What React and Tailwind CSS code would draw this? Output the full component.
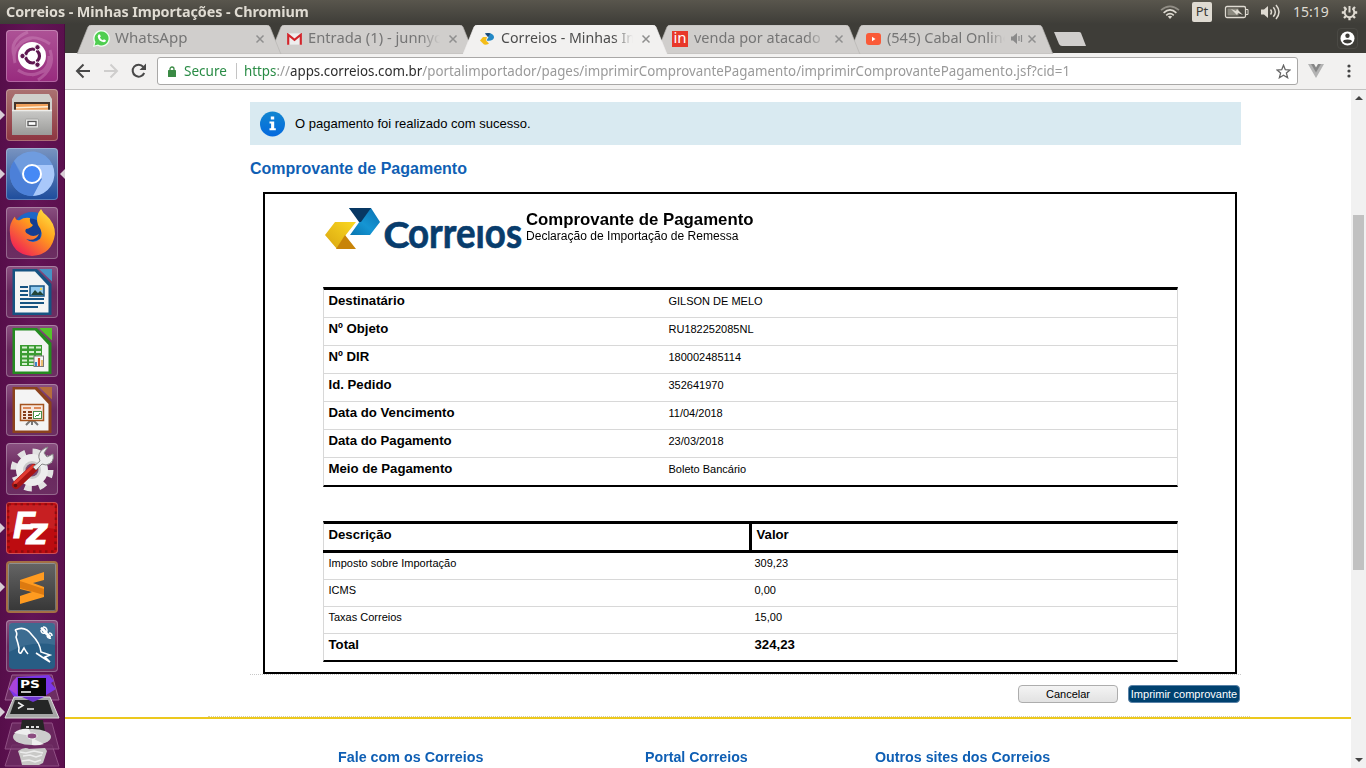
import React from "react";

const UI = "font-['Noto_Sans','Open_Sans',sans-serif]";

/* ---------- system bar ---------- */

function SystemBar() {
  return (
    <header className={`${UI} flex h-6 shrink-0 items-center justify-between bg-linear-to-b from-[#59564d] to-[#3e3d38] pl-1.5 pr-2`}>
      <h1 className="whitespace-nowrap text-[14px] font-bold leading-6 tracking-[-0.1px] text-[#dfdbd2]">
        <Fit width={303}>Correios - Minhas Importações - Chromium</Fit>
      </h1>
      <div className="flex items-center text-[#dfdbd2]">
        <svg width="20" height="16" viewBox="0 0 20 16" fill="none" stroke="currentColor" strokeWidth="1.6">
          <path d="M1 6.2Q10-1.5 19 6.2" opacity=".45" />
          <path d="M3.6 8.8Q10 3 16.4 8.8" />
          <path d="M6.2 11.4Q10 8 13.8 11.4" />
          <path d="M7.8 12.6Q10 11 12.2 12.6L10 15Z" fill="currentColor" stroke="none" />
        </svg>
        <span className="ml-3 flex h-5 w-5 items-center justify-center rounded-xs bg-[#dfdbd2] text-[13px] text-[#3c3b37]">Pt</span>
        <svg className="ml-3" width="25" height="14" viewBox="0 0 25 14" fill="none" stroke="currentColor">
          <rect x="1.5" y="1.5" width="20" height="11" rx="1.5" strokeWidth="1.3" />
          <path d="M22 4.5h2v5h-2" />
          <rect x="3.5" y="3.5" width="11" height="7" fill="#8b897f" stroke="none" />
          <path d="M7 4l5 2 1-2 6 6-5-2-1 2z" fill="currentColor" stroke="none" />
        </svg>
        <svg className="ml-[11px]" width="21" height="18" viewBox="0 0 21 18" fill="none" stroke="currentColor" strokeWidth="1.5">
          <path d="M1 6.5h3L8 3v12l-4-3.500H1z" fill="currentColor" stroke="none" />
          <path d="M10.500 6.500q2 2.500 0 5M13.300 4.200q4 4.800 0 9.600M16 2q6 7 0 14" />
        </svg>
        <span className="ml-3 w-9 whitespace-nowrap text-[14px] leading-6"><Fit width={36}>15:19</Fit></span>
        <svg className="ml-3" width="17" height="17" viewBox="0 0 17 17" fill="none" stroke="currentColor">
          <path d="M5.500 4.500a4.900 4.900 0 1 0 6 0" strokeWidth="2" />
          <path d="M8.500 2v6.500" strokeWidth="2" />
          <path d="M.8 8.500h2.700M13.500 8.500h2.700M8.500 13.500v2.700M3 3l2 2M12 5l2-2M3 14l2-2M12 12l2 2" strokeWidth="2.300" />
        </svg>
      </div>
    </header>
  );
}

/* Text laid out to an exact advance width. */
function Fit({ width, children }) {
  const ref = React.useRef(null);
  const [scale, setScale] = React.useState(1);
  React.useLayoutEffect(() => {
    setScale(width / ref.current.offsetWidth);
  }, [width]);
  return (
    <span ref={ref} className="inline-block origin-left whitespace-pre" style={{ transform: `scaleX(${scale})` }}>
      {children}
    </span>
  );
}

/* ---------- launcher ---------- */

function Tile({ className, left, right, children }) {
  return (
    <div className="relative flex h-[52px] shrink-0 justify-center">
      {left && <svg className="absolute left-0 top-[21px]" width="5" height="10"><path d="M0 0l5 5-5 5z" fill="#d8cdd6" /></svg>}
      <div className={`h-[52px] w-[52px] overflow-hidden rounded-[4px] shadow-[inset_0_0_0_1px_rgba(255,255,255,0.28)] ${className}`}>
        <svg width="52" height="52" viewBox="0 0 52 52">{children}</svg>
      </div>
      {right && <svg className="absolute -right-px top-[21px]" width="5" height="10"><path d="M5 0L0 5l5 5z" fill="#d8cdd6" /></svg>}
    </div>
  );
}

function OfficePage({ edge, light }) {
  return (
    <>
      <path d="M6.500 3H31L45.500 18V49H6.500Z" fill={edge} />
      <path d="M9 5.500H29L42.500 20V46.500H9Z" fill="#f4f4f4" />
      <path d="M33 3H46V15.500Z" fill={light} />
    </>
  );
}

function Launcher() {
  const glass = "bg-linear-to-b from-[#8a5080] via-[#69285e] to-[#6c2e62]";
  return (
    <nav className="flex w-[65px] shrink-0 flex-col gap-[7px] border-r border-[#4a0c40] bg-linear-to-r from-[#560e4a] via-[#631456] to-[#5b104e] pt-1.5">
      <Tile className="bg-linear-to-b from-[#ad5296] to-[#982a7e]">
        <g fill="none" stroke="#d99bc9" opacity=".35">
          <path d="M8 26Q3 10 22 2M9 33Q4 14 26 8M44 20Q50 38 32 50M43 26Q44 42 26 45M14 13Q26 2 44 14M12 40Q24 49 40 40" strokeWidth="3" />
        </g>
        <circle cx="26" cy="26" r="14" fill="#fff" />
        <circle cx="26.500" cy="26" r="7" fill="none" stroke="#5e1650" strokeWidth="3.200" />
        <path d="M26.500 26L16 26M26.500 26l5-9M26.500 26l5 9" stroke="#fff" strokeWidth="1.500" />
        <circle cx="26.500" cy="26" r="4.800" fill="#fff" />
        <g fill="#5e1650" stroke="#fff" strokeWidth="1">
          <circle cx="16.500" cy="26" r="2.700" /><circle cx="31.500" cy="17.300" r="2.700" /><circle cx="31.500" cy="34.700" r="2.700" />
        </g>
      </Tile>
      <Tile left className="bg-linear-to-b from-[#aa7272] to-[#8d3541]">
        <path d="M9 5H43L46 10V46H6V10Z" fill="#cfcfcb" />
        <path d="M8 13H44V22H8Z" fill="#45352c" />
        <path d="M10 15H42V21H10Z" fill="#f0a05a" /><path d="M10 18l32-1v1.500l-32 1z" fill="#fff0d8" />
        <defs><linearGradient id="drawer" x1="0" y1="0" x2="0" y2="1"><stop stopColor="#cacac8" /><stop offset="1" stopColor="#9b9b99" /></linearGradient></defs>
        <path d="M6 21H46V46H6Z" fill="url(#drawer)" />
        <path d="M6 21.500H46" stroke="#ededeb" strokeWidth="1.500" />
        <rect x="19.500" y="30" width="13" height="9" rx="1" fill="#e6e6e4" stroke="#a2a2a0" strokeWidth="1" />
        <rect x="22" y="32.500" width="8" height="4" fill="#fff" stroke="#555" strokeWidth="1.300" />
      </Tile>
      <Tile left right className="bg-linear-to-b from-[#7994c0] to-[#1d4c9c]">
        <circle cx="26" cy="26" r="22" fill="#5b90dd" />
        <path d="M8 13A22 22 0 0 0 27 48L36 31H17Z" fill="#4c80d8" />
        <path d="M27 48A22 22 0 0 0 46.500 17H26L36 31Z" fill="#a9c8fa" />
        <path d="M8 13A22 22 0 0 1 46.500 17H26L17 28Z" fill="#6f9cdf" />
        <circle cx="26" cy="26" r="9" fill="#4689f5" stroke="#fff" strokeWidth="2" />
      </Tile>
      <Tile className={glass}>
        <defs>
          <linearGradient id="fox" x1="1" y1="0" x2="0.200" y2="1"><stop stopColor="#fff14a" /><stop offset=".45" stopColor="#ff9d1c" /><stop offset="1" stopColor="#f01958" /></linearGradient>
        </defs>
        <circle cx="26" cy="24" r="19" fill="#1d66c8" />
        <path d="M13 14Q26 8 36 16L34 32Q22 38 16 27Z" fill="#153d91" />
        <path d="M6 14Q9 9 9 10Q10 14 14 13Q18 10 24 11Q23 16 27 18Q25 21 20 22Q18 25 22 27Q27 31 33 27Q29 35 20 32Q27 38 34 32Q38 26 32 18Q29 9 35 2Q37 6 40 8Q49 16 49 27Q46 48 26 49Q5 47 4 27Q3 19 6 14Z" fill="url(#fox)" />
      </Tile>
      <Tile className={glass}>
        <OfficePage edge="#165382" light="#4793c4" />
        <path d="M14 21H22M14 25H22M14 29H22M14 33H38M14 37H38M14 41H32" stroke="#165382" strokeWidth="2" />
        <rect x="24" y="20" width="14" height="10" fill="#91c9ee" stroke="#165382" strokeWidth="1.500" />
        <path d="M25 29l4-5 3 3 2-2 4 4z" fill="#234537" /><circle cx="35" cy="23" r="1.200" fill="#f4d74f" />
      </Tile>
      <Tile className={glass}>
        <OfficePage edge="#258b20" light="#55c42c" />
        <rect x="14" y="20" width="22" height="21" fill="#3a9b31" />
        <path d="M16 22.500H21M23 22.500H28M30 22.500H35M16 27H21M23 27H28M30 27H35M16 31.500H21M23 31.500H28M30 31.500H35M16 35.500H21M23 35.500H28M16 39H21M23 39H28" stroke="#d5efd0" strokeWidth="2" />
        <rect x="28" y="31" width="9.500" height="10.500" fill="#f5f5f5" stroke="#777" />
        <path d="M30 41V37" stroke="#3a86c9" strokeWidth="2" /><path d="M33 41V33" stroke="#d64a25" strokeWidth="2.200" /><path d="M36 41V35" stroke="#e3a840" strokeWidth="1.500" />
      </Tile>
      <Tile className={glass}>
        <OfficePage edge="#8c421d" light="#b56e3d" />
        <path d="M20 41l4-4h4l4 4M26 37v4" stroke="#777" strokeWidth="2" fill="none" />
        <rect x="14.500" y="20.500" width="23" height="16" fill="#f7e6dc" stroke="#a4531e" strokeWidth="1.500" />
        <path d="M17 24H25M28 24H35" stroke="#dd8a5b" strokeWidth="2" />
        <path d="M17 28H20M22 28H26M17 31H20M22 31H26M17 34H20M22 34H26" stroke="#843b18" strokeWidth="2" />
        <rect x="27.500" y="27.500" width="8" height="7" fill="#fff" stroke="#4a8d4a" /><path d="M29 33l2-2 1 1 2-3" stroke="#269030" fill="none" />
      </Tile>
      <Tile className={glass}>
        <circle cx="26" cy="27" r="18" fill="none" stroke="#e2e2e2" strokeWidth="7" strokeDasharray="7.070 7.067" />
        <circle cx="26" cy="27" r="12.500" fill="#c9c9c9" stroke="#ededed" strokeWidth="7" />
        <circle cx="26" cy="27" r="6.500" fill="#7a4771" />
        <path d="M10 42L28 25" stroke="#a91514" strokeWidth="8" strokeLinecap="round" /><path d="M9 40L27 23" stroke="#e23b32" strokeWidth="3" strokeLinecap="round" />
        <circle cx="9.500" cy="42.500" r="1.800" fill="#581010" />
        <path d="M27 24L34 18Q30 10 39 5L42 4L38 10L41 14L47 11Q49 20 40 22L36 21L30 27Z" fill="#ececec" stroke="#888" />
      </Tile>
      <Tile left className="bg-[#bd0c10]">
        <rect x="2.500" y="2.500" width="47" height="47" fill="none" stroke="#8e0a0e" strokeWidth="2.500" strokeDasharray="2.500 3.500" />
        <path d="M3 3H49V27Q25 22 3 31Z" fill="#dd4d4d" opacity=".3" />
        <text x="7" y="36" fontFamily="Liberation Sans" fontWeight="bold" fontStyle="italic" fontSize="36" fill="#fff" stroke="#fff">F<tspan x="20" y="42" fontSize="37" textLength="22" lengthAdjust="spacingAndGlyphs">z</tspan></text>
      </Tile>
      <Tile left className="border-2 border-[#a47045] bg-linear-to-b from-[#656565] to-[#373737]">
        <path d="M12 17L36 9V17L25 20L36 24V34L12 41V33L24 29L12 26Z" fill="#ff9b20" />
        <path d="M12 18L36 26V32L12 25Z" fill="#dd7a10" />
      </Tile>
      <Tile className={glass}>
        <rect x="3" y="3" width="46" height="46" rx="4" fill="#285d84" />
        <path d="M3 3H49V25Q25 20 3 32Z" fill="#6289aa" opacity=".35" />
        <path d="M9 10Q19 5 26 15Q34 23 35 32L44 35L39 37L44 42L36 37L30 33M9 10Q12 13 10 17Q12 23 13 28Q12 34 15 33L18 28Q20 32 22 34" fill="none" stroke="#fff" strokeWidth="1.600" />
        <path d="M36 8.500l2.500 2.500M39 12l4.500 4.500" stroke="#fff" strokeWidth="3" strokeLinecap="round" /><path d="M35 10q0 4 4 3l2-2q0-4-4-4M41 16q1 3 4 2M46 16q0-3-3-3" fill="none" stroke="#fff" strokeWidth="1.500" />
      </Tile>
      <svg className="-mt-1.5 shrink-0" width="64" height="95" viewBox="0 0 64 95">
        <g stroke="#9c5f90" fill="#6d2d62">
          <path d="M12 2H52L59 27H5Z" />
          <path d="M12 72H52L59 93H5Z" opacity=".8" />
          <path d="M12 50H52L59 76H5Z" opacity=".8" />
        </g>
        <path d="M17 4L49 2L54 8L51 10L56 16L38 27L14 24L9 16L13 10Z" fill="#7b35e8" />
        <path d="M9 16L13 8L17 4V22Z" fill="#a844da" />
        <rect x="18" y="5" width="28" height="18" fill="#070707" />
        <text x="20" y="15" fontFamily="DejaVu Sans" fontWeight="bold" fontSize="11" fill="#fff" textLength="20" lengthAdjust="spacingAndGlyphs">PS</text>
        <path d="M21 19H31" stroke="#fff" strokeWidth="1.500" />
        <path d="M14 24H50L59 45H5Z" fill="#a6a6a6" stroke="#ddd" />
        <path d="M15 27H48L53 41H10Z" fill="#252626" />
        <path d="M22 24H44L33 29Z" fill="#6e35d0" />
        <path d="M18 29.500l5 3-5 3M27 36h7" fill="none" stroke="#eee" strokeWidth="1.500" />
        <path d="M22 47H43L45 59H20Z" fill="#252525" /><path d="M26 54H39" stroke="#ddd" strokeWidth="2" strokeDasharray="3 2" />
        <ellipse cx="32" cy="64" rx="19" ry="8" fill="#ccc" /><path d="M32 63L14 60Q20 55 29 56ZM32 65L44 71Q38 73 32 72Z" fill="#eee" />
        <ellipse cx="32" cy="63" rx="5" ry="3" fill="#8b4c80" stroke="#eee" />
        <path d="M18 78Q25 73 29 76L45 75L47 78L43 90L39 92H22L20 84Z" fill="#c9c9c7" />
        <path d="M20 79l6 1 8-2 9 2M23 83l7-1 6 2 6-2M22 88l7-1 6 2 6-2" stroke="#ececec" fill="none" strokeWidth="1.500" />
        <path d="M0 34l5 5-5 5z" fill="#d8cdd6" />
      </svg>
    </nav>
  );
}

/* ---------- browser chrome ---------- */

function Close() {
  return <svg className="shrink-0" width="10" height="10" viewBox="0 0 10 10"><path d="M1.500 1.500l7 7M8.500 1.500l-7 7" stroke="#8f8f8f" strokeWidth="1.500" /></svg>;
}

function Tab({ icon, title, width, active, audio, z }) {
  const fill = active ? "#f2f1f0" : "#d0cecc";
  return (
    <div className={`relative -mr-3 flex h-[29px] w-[205px] shrink-0 items-center pb-[3px] pl-4 pr-[17px] ${z}`}>
      <svg className="absolute inset-0" width="205" height="29" viewBox="0 0 205 29">
        <path d="M0 29L1 27L11 2Q12 0 14 0H190Q192 0 193 2L203 27L204 29Z" fill={fill} stroke={active ? "#f2f1f0" : "#b8b6b3"} strokeWidth=".7" />
      </svg>
      <span className="relative mt-px flex h-4 w-4 shrink-0 items-center justify-center">{icon}</span>
      <span className={`relative ml-1.5 min-w-0 flex-1 overflow-hidden whitespace-nowrap text-[14px] leading-[26px] ${audio ? "mr-1.5" : "mr-2"} mask-r-from-85% ${active ? "text-[#4c4c4c]" : "text-[#757575]"}`}>
        <Fit width={width}>{title}</Fit>
      </span>
      {audio && (
        <svg className="relative mr-1 shrink-0" width="12" height="11" viewBox="0 0 12 11">
          <path d="M0 3.500h2L6 0v11L2 7.500H0z" fill="#8a8a8a" /><path d="M8 3v5M10.500 2v7" stroke="#8a8a8a" strokeWidth="1.200" />
        </svg>
      )}
      <span className="relative mt-0.5 flex"><Close /></span>
    </div>
  );
}

const whatsapp = (
  <svg width="17" height="17" viewBox="0 0 17 17" className="shrink-0">
    <path d="M0 17L1.200 12.500A8.300 8.300 0 1 1 4.500 15.800Z" fill="#f3fff3" />
    <path d="M1.500 15.500L2.500 12A7 7 0 1 1 5 14.500Z" fill="#4fce50" />
    <path d="M5.500 4.500l1.500 0 .8 2-.9 1q1 2 3 2.800l1-1.100 2 1q0 2-2 2Q5.500 11.500 4.700 6.500Z" fill="#fff" />
  </svg>
);
const gmail = (
  <svg width="15" height="12" viewBox="0 0 16 12"><path d="M1 0H15V12H1Z" fill="#eee" /><path d="M1.300 12V1.500L8 7l6.700-5.500V12" fill="none" stroke="#d3252b" strokeWidth="2.300" /></svg>
);
function Swirl() {
  return (
    <svg width="15" height="12" viewBox="0 0 15 12">
      <path d="M5 .5Q9-.5 12 1Q15.500 3.500 13 6.500Q10 8.500 6.500 7.500L8.500 4Z" fill="#2389c6" /><path d="M5 .5Q8-.3 10.500.4L8 4Z" fill="#1c4775" />
      <path d="M3 4H7L6 7.500L9 10.500Q8 12 4 11.500L0 7.500Z" fill="#f4bd19" />
    </svg>
  );
}
const inSite = (
  <span className="flex h-4 w-4 items-center justify-center bg-[#e8382a] pb-0.5 text-[15px] leading-none text-white">in</span>
);
const youtube = (
  <svg width="15" height="12" viewBox="0 0 15 12"><rect width="15" height="12" rx="3" fill="#fa5a38" /><path d="M6 3.800L9.500 6L6 8.200Z" fill="#fff" /></svg>
);

function TabStrip() {
  return (
    <div className={`${UI} flex h-[29px] shrink-0 justify-between bg-[#3e3d38] pl-3`}>
      <div className="flex pt-px">
        <Tab icon={whatsapp} title="WhatsApp" width={72} z="z-5" />
        <Tab icon={gmail} title="Entrada (1) - junnyor" width={141} z="z-4" />
        <Tab icon={<Swirl />} title="Correios - Minhas Impo" width={156} active z="z-10" />
        <Tab icon={inSite} title="venda por atacado" width={127} z="z-3" />
        <Tab icon={youtube} title="(545) Cabal Online" width={124} audio z="z-2" />
        <svg className="ml-[11px] mt-1.5" width="33" height="17" viewBox="0 0 33 17"><path d="M1 1H26Q27.500 1 28 2L33 15H9Q7 15 6 13Z" fill="#d0cecc" /></svg>
      </div>
      <div className="mr-2 mt-1 flex h-[21px] w-[21px] items-center justify-center rounded-sm border border-[#4a4944]">
        <svg width="15" height="15" viewBox="0 0 15 15"><circle cx="7.500" cy="7.500" r="7" fill="#fff" /><circle cx="7.500" cy="4.800" r="2.200" fill="#3c3b37" /><path d="M3 10.500Q3 8.500 7.500 8.500T12 10.500Q10.500 12.500 7.500 12.500T3 10.500Z" fill="#3c3b37" /></svg>
      </div>
    </div>
  );
}

function Toolbar() {
  return (
    <div className={`${UI} flex h-[37px] shrink-0 items-center border-b border-[#c3c2c1] bg-[#f2f1f0] pl-2.5`}>
      <svg width="16" height="16" viewBox="0 0 16 16" fill="none" stroke="#484848" strokeWidth="2"><path d="M15 8H2.500M8.500 1.500L2 8l6.500 6.500" /></svg>
      <svg className="ml-3" width="16" height="16" viewBox="0 0 16 16" fill="none" stroke="#cfcecd" strokeWidth="2"><path d="M1 8H13.500M7.500 1.500L14 8l-6.500 6.500" /></svg>
      <svg className="ml-3" width="16" height="16" viewBox="0 0 16 16"><path d="M13.200 10A6 6 0 1 1 12.300 3.800" fill="none" stroke="#484848" strokeWidth="2" /><path d="M15 .5V7H8.500Z" fill="#484848" /></svg>
      <div className="ml-2.5 flex h-7 w-[1141px] items-center rounded-[3px] border border-[#a9a8a7] bg-white pl-2.5 pr-1.5 text-[14.5px]">
        <svg width="8" height="11" viewBox="0 0 8 11"><rect y="4" width="8" height="7" rx=".6" fill="#3a8a44" /><path d="M2 5V3a2 2 0 0 1 4 0v2" fill="none" stroke="#3a8a44" strokeWidth="1.300" /></svg>
        <span className="ml-2 w-[43px] whitespace-nowrap text-[#2a8c46]"><Fit width={43}>Secure</Fit></span>
        <span className="ml-[9px] h-4 w-px bg-[#c4c4c4]" />
        <span className="ml-[7px] flex-1 whitespace-nowrap text-[#9a9a9a]">
          <Fit width={826}><span className="text-[#2a8c46]">https</span>://<span className="text-[#2e2e2e]">apps.correios.com.br</span>/portalimportador/pages/imprimirComprovantePagamento/imprimirComprovantePagamento.jsf?cid=1</Fit>
        </span>
        <svg width="15" height="15" viewBox="0 0 15 15"><path d="M7.500 1.200L9.300 5.700L14 6L10.400 9.100L11.600 13.700L7.500 11.200L3.400 13.700L4.600 9.100L1 6L5.700 5.700Z" fill="none" stroke="#666" strokeWidth="1.300" /></svg>
      </div>
      <svg className="ml-2.5" width="16" height="14" viewBox="0 0 16 14"><path d="M0 0H3.500L8 7.500L12.500 0H16L8 14Z" fill="#b3b3b3" /><path d="M3 0H6L8 3.500L10 0H13L8 8.500Z" fill="#868686" /></svg>
      <svg className="ml-[23px]" width="4" height="14" viewBox="0 0 4 14" fill="#444"><circle cx="2" cy="2" r="1.600" /><circle cx="2" cy="7" r="1.600" /><circle cx="2" cy="12" r="1.600" /></svg>
    </div>
  );
}

/* ---------- page ---------- */

function Logo() {
  return (
    <svg className="shrink-0" width="197" height="44" viewBox="0 0 197 44">
      <defs>
        <linearGradient id="lb" x1="1" y1="0" x2="0" y2="1"><stop stopColor="#0a70b0" /><stop offset=".55" stopColor="#1595d3" /><stop offset="1" stopColor="#0874af" /></linearGradient>
        <linearGradient id="ly" x1="0" y1="1" x2="1" y2="0"><stop stopColor="#d9a510" /><stop offset="1" stopColor="#fbd922" /></linearGradient>
        <clipPath id="wm"><path d="M58 8H84V44H58ZM84 17.500H197V44H84Z" /></clipPath>
      </defs>
      <path d="M24 0H46L55 14L45 27H25L35 13Z" fill="url(#lb)" />
      <path d="M24 0H46L36 14H34Z" fill="#083763" />
      <path d="M10 14H31L20 28L12 41L0 27Z" fill="url(#ly)" />
      <path d="M20 27L31 41H11Z" fill="#c88409" />
      <text x="58.500" y="40.300" clipPath="url(#wm)" fill="#083c6c" stroke="#083c6c" strokeWidth=".7" fontFamily="Lato, sans-serif" fontWeight="bold" fontSize="36.500">
        <tspan textLength="26" lengthAdjust="spacingAndGlyphs">C</tspan><tspan x="83" fontSize="42.500" textLength="114" lengthAdjust="spacingAndGlyphs">orreios</tspan>
      </text>
    </svg>
  );
}

const details = [
  ["Destinatário", "GILSON DE MELO"],
  ["Nº Objeto", "RU182252085NL"],
  ["Nº DIR", "180002485114"],
  ["Id. Pedido", "352641970"],
  ["Data do Vencimento", "11/04/2018"],
  ["Data do Pagamento", "23/03/2018"],
  ["Meio de Pagamento", "Boleto Bancário"],
];

const charges = [
  ["Imposto sobre Importação", "309,23"],
  ["ICMS", "0,00"],
  ["Taxas Correios", "15,00"],
];

function Receipt() {
  return (
    <section className="mx-[13px] mr-1 mt-[13px] h-[482px] border-2 border-black pl-[58px] pr-[57px] pt-3.5 text-black">
      <div className="flex h-[79px] pl-0.5">
        <Logo />
        <div className="ml-1 pt-0.5">
          <h3 className="text-[17px] font-bold leading-[19px]"><Fit width={228}>Comprovante de Pagamento</Fit></h3>
          <p className="text-[12px] leading-[14px]"><Fit width={212}>Declaração de Importação de Remessa</Fit></p>
        </div>
      </div>
      <dl className="h-[200px] border-x border-b-2 border-t-[3px] border-x-[#d8d8d8] border-y-black">
        {details.map(([k, v]) => (
          <div key={k} className="flex h-7 border-b border-[#d8d8d8] pl-[4.500px] pt-0.5 last:h-[27px] last:border-b-0">
            <dt className="w-[340px] text-[13.200px] font-bold leading-[17px]">{k}</dt>
            <dd className="text-[11px] leading-[18px]">{v}</dd>
          </div>
        ))}
      </dl>
      <div className="mt-[34px] h-[141px] border-x border-b-2 border-t-[3px] border-x-[#d8d8d8] border-y-black text-[11px]">
        <div className="-mx-px flex h-[29px] border-b-[3px] border-black text-[13.200px] font-bold leading-[17px]">
          <div className="w-[429px] border-r-[3px] border-black pl-[5.500px] pt-0.5">Descrição</div>
          <div className="pl-[4.500px] pt-0.5">Valor</div>
        </div>
        {charges.map(([k, v]) => (
          <div key={k} className="flex h-[27px] border-b border-[#d8d8d8] pl-[4.500px] pt-px leading-[18px]">
            <span className="w-[426px]">{k}</span>
            <span>{v}</span>
          </div>
        ))}
        <div className="flex pl-[4.500px] pt-0.5 text-[13.200px] font-bold leading-[18px]">
          <span className="w-[426px]">Total</span>
          <span>324,23</span>
        </div>
      </div>
    </section>
  );
}

function Page() {
  return (
    <main className="flex min-w-0 flex-1 flex-col overflow-hidden bg-white font-['Liberation_Sans',Arial,sans-serif]">
      <div className="ml-[185px] mt-3 w-[991px]">
        <div className="flex h-[43px] items-center bg-[#d9eaf1] pl-2.5 text-[13px] text-black">
          <svg width="26" height="26" viewBox="0 0 26 26">
            <defs><linearGradient id="info" x1="0" y1="0" x2="0" y2="1"><stop stopColor="#1286d0" /><stop offset="1" stopColor="#0469de" /></linearGradient></defs>
            <circle cx="12.500" cy="13" r="12.500" fill="url(#info)" />
            <path d="M10.800 5.500h3.400v3h-3.400zM9.500 10.500h4.700v6.800h1.600v1.900H9.500v-1.900h1.600v-4.900H9.500z" fill="#fff" />
          </svg>
          <p className="ml-[9px]">O pagamento foi realizado com sucesso.</p>
        </div>
        <h2 className="mt-[13px] text-[16px] font-bold leading-[21px] text-[#0f5fb4]">Comprovante de Pagamento</h2>
        <Receipt />
        <div className="border-t border-dotted border-[#c8c8c8]" />
        <div className="mt-2.5 flex justify-end gap-2.5 pr-px text-[11px]">
          <button className="h-[18px] w-[100px] rounded-[4px] border border-[#adadad] bg-linear-to-b from-[#f4f4f4] to-[#e2e2e2] leading-4 text-black">Cancelar</button>
          <button className="h-[18px] w-28 whitespace-nowrap rounded-[4px] border border-[#5b83a8] bg-[#00416f] leading-4 text-white">Imprimir comprovante</button>
        </div>
      </div>
      <div className="ml-[143px] mt-[13px] w-[1042px] border-t border-dotted border-[#d8cfa0]" />
      <footer className="h-[51px] shrink-0 border-t-2 border-[#ecc81e] pl-[273px] pt-[29px] text-[14.500px] font-bold leading-[18px] text-[#0f5fb4]">
        <div className="flex whitespace-nowrap">
          <span className="w-[307px]"><Fit width={145}>Fale com os Correios</Fit></span>
          <span className="w-[230px]"><Fit width={103}>Portal Correios</Fit></span>
          <span><Fit width={175}>Outros sites dos Correios</Fit></span>
        </div>
      </footer>
    </main>
  );
}

function Scrollbar() {
  return (
    <div className="flex w-[15px] shrink-0 flex-col items-center justify-between bg-[#f1f1f1] py-1.5">
      <svg width="8" height="4"><path d="M0 4L4 0l4 4z" fill="#444" /></svg>
      <div className="mb-[188px] mt-auto h-[355px] w-[11px] bg-[#c1c1c1]" />
      <svg width="8" height="4"><path d="M0 0h8L4 4z" fill="#444" /></svg>
    </div>
  );
}

export default function App() {
  return (
    <div className="flex h-[768px] w-[1366px] flex-col overflow-hidden bg-white">
      <SystemBar />
      <div className="flex min-h-0 flex-1">
        <Launcher />
        <div className="flex min-w-0 flex-1 flex-col">
          <TabStrip />
          <Toolbar />
          <div className="flex min-h-0 flex-1">
            <Page />
            <Scrollbar />
          </div>
        </div>
      </div>
    </div>
  );
}
